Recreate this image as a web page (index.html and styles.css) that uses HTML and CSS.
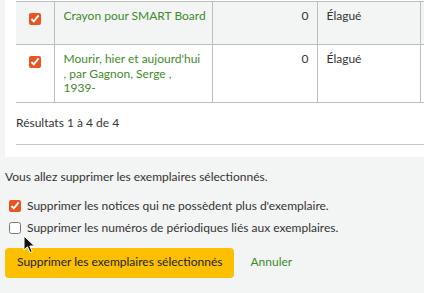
FILE: index.html
```html
<!DOCTYPE html>
<html lang="fr">
<head>
    <meta charset="UTF-8">
    <title>Supprimer les exemplaires</title>
    <link rel="stylesheet" href="styles.css">
</head>
<body>
<div class="page">
    <div class="panel">
        <table class="items">
            <colgroup>
                <col class="c_check">
                <col class="c_title">
                <col class="c_count">
                <col class="c_status">
                <col class="c_more">
            </colgroup>
            <tr class="row_odd">
                <td class="td_check"><input type="checkbox" checked></td>
                <td class="td_title nowrap"><a href="#">Crayon pour SMART Board</a></td>
                <td class="td_num">0</td>
                <td>Élagué</td>
                <td></td>
            </tr>
            <tr class="row_even">
                <td class="td_check"><input type="checkbox" checked></td>
                <td class="td_title"><a href="#">Mourir, hier et aujourd'hui , par Gagnon, Serge , 1939-</a></td>
                <td class="td_num">0</td>
                <td>Élagué</td>
                <td></td>
            </tr>
        </table>
        <div class="results_info">Résultats 1 à 4 de 4</div>
    </div>

    <form class="confirm" action="#">
        <p class="confirm_msg">Vous allez supprimer les exemplaires sélectionnés.</p>
        <label class="opt"><input type="checkbox" checked>Supprimer les notices qui ne possèdent plus d'exemplaire.</label>
        <label class="opt"><input type="checkbox">Supprimer les numéros de périodiques liés aux exemplaires.</label>
        <div class="actions">
            <button type="submit" class="btn_primary">Supprimer les exemplaires sélectionnés</button>
            <a href="#" class="cancel">Annuler</a>
        </div>
    </form>

    <!-- pointeur de souris -->
    <svg class="cursor" width="13" height="19" viewBox="0 0 13 19">
        <path d="M1 1 L1 15 L4.5 11.8 L7 17.5 L9.2 16.6 L6.8 11 L11.5 11 Z" fill="#111" stroke="#fff" stroke-width="1"/>
    </svg>
</div>
</body>
</html>
```

FILE: styles.css
```css
html, body{
    margin: 0;
    padding: 0;
    overflow: hidden;
}
body{
    background: #f3f4f4;
    font-family: "Lato", "Open Sans", sans-serif;
    font-size: 12px;
    line-height: 14.5px;
    color: #333;
}
.page{
    position: relative;
    width: 424px;
    height: 293px;
    overflow: hidden;
}

/* bloc blanc du tableau (coupé à droite) */
.panel{
    margin-left: 5px;
    background: #fff;
    padding: 1px 0 12px 11px;
    overflow: hidden;
}
.items{
    border-collapse: collapse;
    table-layout: fixed;
    width: 560px;
}
.c_check{ width: 38px; }
.c_title{ width: 158px; }
.c_count{ width: 105px; }
.c_status{ width: 103px; }
.items td{
    border-top: 1px solid #bdbdbd;
    border-bottom: 1px solid #bdbdbd;
    border-left: 1px solid #bdbdbd;
    padding: 7px 8px 6px 9px;
    vertical-align: top;
}
.items td:first-child{
    border-left: none;
}
.nowrap{
    white-space: nowrap;
}
.row_odd td{
    background: #f3f4f4;
    height: 29px;
}
.row_even td{
    background: #fff;
    height: 44px;
}
.td_check{
    text-align: center;
}
.td_check input, .opt input{
    width: 12px;
    height: 12px;
    margin: 0;
    accent-color: #e95420;
    vertical-align: -2px;
}
.td_check input{
    margin-top: 4px;
}
.td_num{
    text-align: right;
}
.items a, .cancel{
    color: #3f8a2c;
    text-decoration: none;
}
.results_info{
    padding: 13px 0 13px;
    border-bottom: 1px solid #c6c6c6;
}

/* zone de confirmation */
.confirm{
    padding: 13px 5px 10px;
}
.confirm_msg{
    margin: 0 0 15px;
}
.opt{
    display: block;
    padding-left: 4px;
    margin-bottom: 7.5px;
}
.opt input{
    margin-right: 6px;
}
.actions{
    display: flex;
    align-items: center;
    gap: 16px;
    margin-top: 12px;
}
.btn_primary{
    font: inherit;
    color: #222;
    background: #fdc000;
    border: none;
    border-radius: 4px;
    height: 30px;
    padding: 0 12px;
}

.cursor{
    position: absolute;
    left: 23px;
    top: 235px;
}
```
